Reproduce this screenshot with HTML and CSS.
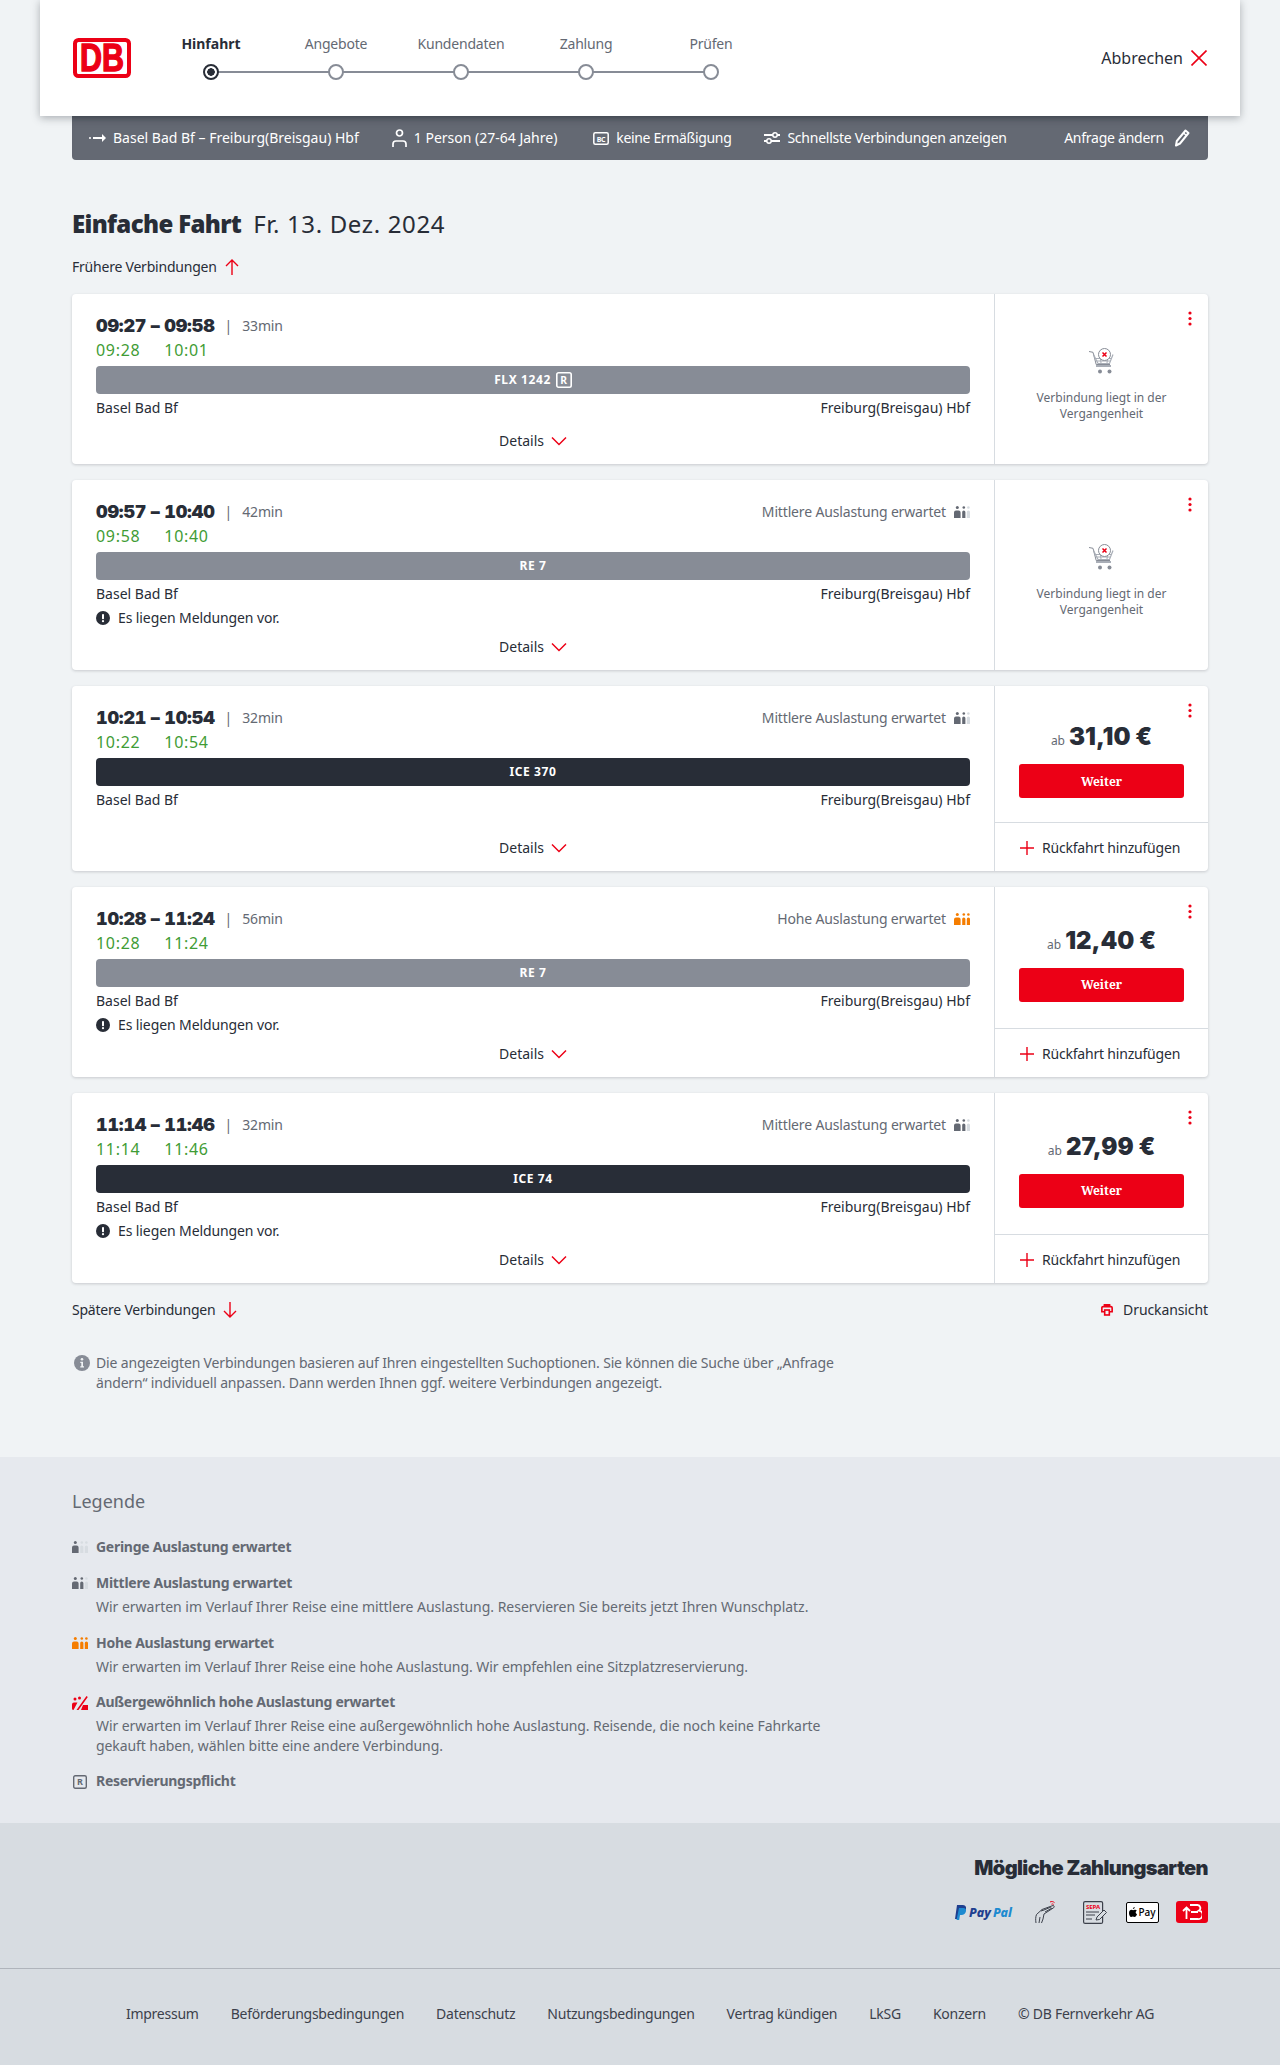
FILE: index.html
```html
<!DOCTYPE html>
<html lang="de">
<head>
<meta charset="utf-8">
<title>Angebote</title>
<link rel="stylesheet" href="styles.css">
</head>
<body>
<svg class="defs" width="0" height="0" aria-hidden="true">
  <symbol id="load" viewBox="0 0 16 12">
    <g class="p1"><circle cx="3.3" cy="1.5" r="1.5"/><path d="M0 6.5a2 2 0 0 1 2-2h2.6a2 2 0 0 1 2 2V12H0z"/></g>
    <g class="p2"><circle cx="9.8" cy="1.5" r="1.3"/><path d="M8.2 6a1.6 1.6 0 0 1 3.2 0v6H8.2z"/></g>
    <g class="p3"><circle cx="14.4" cy="1.5" r="1.3"/><path d="M12.8 6a1.6 1.6 0 0 1 3.2 0v6h-3.2z"/></g>
  </symbol>
  <symbol id="chev" viewBox="0 0 16 10"><path d="M1 1.5l7 7 7-7" fill="none" stroke="#ec0016" stroke-width="1.5"/></symbol>
  <symbol id="warn" viewBox="0 0 14 14"><circle cx="7" cy="7" r="7" fill="#282d37"/><rect x="6" y="3" width="2" height="5.2" rx=".8" fill="#fff"/><circle cx="7" cy="10.2" r="1.1" fill="#fff"/></symbol>
  <symbol id="plus" viewBox="0 0 14 14"><path d="M7 0v14M0 7h14" stroke="#ec0016" stroke-width="1.4" fill="none"/></symbol>
  <symbol id="dots" viewBox="0 0 4 15"><circle cx="2" cy="2" r="1.6"/><circle cx="2" cy="7.5" r="1.6"/><circle cx="2" cy="13" r="1.6"/></symbol>
  <symbol id="cart" viewBox="0 0 26 26">
    <path d="M0 3.5l4 .8 3.2 12.2h13.8" fill="none" stroke="#878c96" stroke-width="1"/>
    <path d="M4.5 6.5l4.5 9h11.5l3.5-9" fill="none" stroke="#a9aeb7" stroke-width="1.2"/>
    <path d="M5.5 10.5h17M7.5 13h14M11 7l1 8M19 7l-1 8" stroke="#a9aeb7" stroke-width="1" fill="none"/>
    <rect x="7" y="17" width="15" height="2" fill="#a9aeb7"/>
    <circle cx="11" cy="23.500" r="2" fill="#878c96"/><circle cx="20.500" cy="23.500" r="2" fill="#878c96"/>
    <circle cx="15.500" cy="6.500" r="6" fill="#fff" stroke="#878c96"/>
    <path d="M13.500 4.500l4 4M17.500 4.500l-4 4" stroke="#ec0016" stroke-width="1.500"/>
  </symbol>
</svg>

<header class="topbar">
  <svg class="logo" viewBox="0 0 58 40" width="58" height="40">
    <rect x="2" y="2" width="54" height="36" rx="3.500" fill="#fff" stroke="#ec0016" stroke-width="4"/>
    <text x="29" y="33" text-anchor="middle" textLength="44" lengthAdjust="spacingAndGlyphs" class="logo-text">DB</text>
  </svg>
  <ol class="steps">
    <li class="step active"><span class="step-label">Hinfahrt</span><span class="step-dot"></span></li>
    <li class="step"><span class="step-label">Angebote</span><span class="step-dot"></span></li>
    <li class="step"><span class="step-label">Kundendaten</span><span class="step-dot"></span></li>
    <li class="step"><span class="step-label">Zahlung</span><span class="step-dot"></span></li>
    <li class="step"><span class="step-label">Prüfen</span><span class="step-dot"></span></li>
  </ol>
  <a class="cancel">Abbrechen
    <svg width="16" height="16" viewBox="0 0 16 16"><path d="M.5.5l15 15M15.500.5l-15 15" stroke="#ec0016" stroke-width="1.600" fill="none"/></svg>
  </a>
</header>

<main class="main">
  <div class="summary">
    <span class="sum-item">
      <svg width="17" height="10" viewBox="0 0 17 10"><circle cx="1" cy="5" r="1" fill="#fff"/><path d="M4 4h9V1l4 4-4 4V6H4z" fill="#fff"/></svg>
      Basel Bad Bf – Freiburg(Breisgau) Hbf</span>
    <span class="sum-item">
      <svg width="15" height="18" viewBox="0 0 15 18"><circle cx="7.500" cy="4" r="3" fill="none" stroke="#fff" stroke-width="1.700"/><path d="M1 18v-3a3 3 0 0 1 3-3h7a3 3 0 0 1 3 3v3" fill="none" stroke="#fff" stroke-width="1.700"/></svg>
      1 Person (27-64 Jahre)</span>
    <span class="sum-item sum-disc">
      <svg width="16" height="13" viewBox="0 0 16 13"><rect x=".8" y=".8" width="14.400" height="11.400" rx="1.500" fill="none" stroke="#fff" stroke-width="1.500"/><text x="8" y="9.500" text-anchor="middle" class="bc">BC</text></svg>
      keine Ermäßigung</span>
    <span class="sum-item sum-fast">
      <svg width="16" height="14" viewBox="0 0 16 14"><path d="M0 4h9M13 4h3M0 10h3M7 10h9" stroke="#fff" stroke-width="1.800"/><circle cx="11" cy="4" r="2.200" fill="none" stroke="#fff" stroke-width="1.500"/><circle cx="5" cy="10" r="2.200" fill="none" stroke="#fff" stroke-width="1.500"/></svg>
      Schnellste Verbindungen anzeigen</span>
    <span class="sum-item sum-edit">Anfrage ändern
      <svg width="16" height="18" viewBox="0 0 16 18"><path d="M11.500 1.500l3 2.500-8.500 10.500-4 2 .8-4.500z" fill="none" stroke="#fff" stroke-width="2" stroke-linejoin="round"/><path d="M9.500 4l3 2.500" stroke="#fff" stroke-width="1.500"/></svg>
    </span>
  </div>

  <h1 class="page-title"><strong>Einfache Fahrt</strong> <span>Fr. 13. Dez. 2024</span></h1>

  <a class="nav-link nav-top">Frühere Verbindungen
    <svg width="14" height="16" viewBox="0 0 14 16"><path d="M7 16V1M1 7l6-6 6 6" fill="none" stroke="#ec0016" stroke-width="1.400"/></svg>
  </a>

  <section class="cards">
    <article class="card">
      <div class="trip">
        <div class="times">
          <b class="t-dep">09:27 –&nbsp;</b>
          <div class="t-rest"><b>09:58</b><span class="sep">|</span><span class="dur">33min</span></div>
          <span class="t-live">09:28</span><span class="t-live">10:01</span>
        </div>
        <div class="train grey">FLX 1242 <svg class="res" width="16" height="16" viewBox="0 0 14 14"><rect x=".7" y=".7" width="12.600" height="12.600" rx="1.500" fill="none" stroke="#fff" stroke-width="1.400"/><text x="7" y="10.300" text-anchor="middle" class="res-r">R</text></svg></div>
        <div class="stations"><span>Basel Bad Bf</span><span>Freiburg(Breisgau) Hbf</span></div>
        <div class="details">Details <svg width="16" height="10"><use href="#chev"/></svg></div>
      </div>
      <aside class="panel past">
        <svg class="menu" width="4" height="15"><use href="#dots"/></svg>
        <svg width="26" height="26"><use href="#cart"/></svg>
        <p>Verbindung liegt in der Vergangenheit</p>
      </aside>
    </article>

    <article class="card">
      <div class="trip">
        <div class="times">
          <b class="t-dep">09:57 –&nbsp;</b>
          <div class="t-rest"><b>10:40</b><span class="sep">|</span><span class="dur">42min</span><span class="load">Mittlere Auslastung erwartet <svg class="lv-mid" width="16" height="12"><use href="#load"/></svg></span></div>
          <span class="t-live">09:58</span><span class="t-live">10:40</span>
        </div>
        <div class="train grey">RE 7</div>
        <div class="stations"><span>Basel Bad Bf</span><span>Freiburg(Breisgau) Hbf</span></div>
        <div class="note"><svg width="14" height="14"><use href="#warn"/></svg>Es liegen Meldungen vor.</div>
        <div class="details">Details <svg width="16" height="10"><use href="#chev"/></svg></div>
      </div>
      <aside class="panel past">
        <svg class="menu" width="4" height="15"><use href="#dots"/></svg>
        <svg width="26" height="26"><use href="#cart"/></svg>
        <p>Verbindung liegt in der Vergangenheit</p>
      </aside>
    </article>

    <article class="card">
      <div class="trip">
        <div class="times">
          <b class="t-dep">10:21 –&nbsp;</b>
          <div class="t-rest"><b>10:54</b><span class="sep">|</span><span class="dur">32min</span><span class="load">Mittlere Auslastung erwartet <svg class="lv-mid" width="16" height="12"><use href="#load"/></svg></span></div>
          <span class="t-live">10:22</span><span class="t-live">10:54</span>
        </div>
        <div class="train dark">ICE 370</div>
        <div class="stations"><span>Basel Bad Bf</span><span>Freiburg(Breisgau) Hbf</span></div>
        <div class="details">Details <svg width="16" height="10"><use href="#chev"/></svg></div>
      </div>
      <aside class="panel">
        <svg class="menu" width="4" height="15"><use href="#dots"/></svg>
        <div class="offer">
          <div class="price"><small>ab</small> <b>31,10 €</b></div>
          <button class="btn">Weiter</button>
        </div>
        <div class="return"><svg width="14" height="14"><use href="#plus"/></svg>Rückfahrt hinzufügen</div>
      </aside>
    </article>

    <article class="card">
      <div class="trip">
        <div class="times">
          <b class="t-dep">10:28 –&nbsp;</b>
          <div class="t-rest"><b>11:24</b><span class="sep">|</span><span class="dur">56min</span><span class="load">Hohe Auslastung erwartet <svg class="lv-high" width="16" height="12"><use href="#load"/></svg></span></div>
          <span class="t-live">10:28</span><span class="t-live">11:24</span>
        </div>
        <div class="train grey">RE 7</div>
        <div class="stations"><span>Basel Bad Bf</span><span>Freiburg(Breisgau) Hbf</span></div>
        <div class="note"><svg width="14" height="14"><use href="#warn"/></svg>Es liegen Meldungen vor.</div>
        <div class="details">Details <svg width="16" height="10"><use href="#chev"/></svg></div>
      </div>
      <aside class="panel">
        <svg class="menu" width="4" height="15"><use href="#dots"/></svg>
        <div class="offer">
          <div class="price"><small>ab</small> <b>12,40 €</b></div>
          <button class="btn">Weiter</button>
        </div>
        <div class="return"><svg width="14" height="14"><use href="#plus"/></svg>Rückfahrt hinzufügen</div>
      </aside>
    </article>

    <article class="card">
      <div class="trip">
        <div class="times">
          <b class="t-dep">11:14 –&nbsp;</b>
          <div class="t-rest"><b>11:46</b><span class="sep">|</span><span class="dur">32min</span><span class="load">Mittlere Auslastung erwartet <svg class="lv-mid" width="16" height="12"><use href="#load"/></svg></span></div>
          <span class="t-live">11:14</span><span class="t-live">11:46</span>
        </div>
        <div class="train dark">ICE 74</div>
        <div class="stations"><span>Basel Bad Bf</span><span>Freiburg(Breisgau) Hbf</span></div>
        <div class="note"><svg width="14" height="14"><use href="#warn"/></svg>Es liegen Meldungen vor.</div>
        <div class="details">Details <svg width="16" height="10"><use href="#chev"/></svg></div>
      </div>
      <aside class="panel">
        <svg class="menu" width="4" height="15"><use href="#dots"/></svg>
        <div class="offer">
          <div class="price"><small>ab</small> <b>27,99 €</b></div>
          <button class="btn">Weiter</button>
        </div>
        <div class="return"><svg width="14" height="14"><use href="#plus"/></svg>Rückfahrt hinzufügen</div>
      </aside>
    </article>
  </section>

  <div class="after-cards">
    <a class="nav-link">Spätere Verbindungen
      <svg width="14" height="16" viewBox="0 0 14 16"><path d="M7 0v15M1 9l6 6 6-6" fill="none" stroke="#ec0016" stroke-width="1.400"/></svg>
    </a>
    <a class="nav-link print">
      <svg width="12" height="12" viewBox="0 0 14 14"><path d="M3.500 9H1V4.500A1.500 1.500 0 0 1 2.500 3h9A1.500 1.500 0 0 1 13 4.500V9h-2.500M4 3V1h6v2" fill="none" stroke="#ec0016" stroke-width="1.900"/><rect x="4.300" y="7" width="5.400" height="5.800" fill="none" stroke="#ec0016" stroke-width="1.900"/></svg>
      Druckansicht
    </a>
  </div>

  <div class="info">
    <svg width="16" height="16" viewBox="0 0 16 16"><circle cx="8" cy="8" r="8" fill="#878c96"/><circle cx="8" cy="4.300" r="1.300" fill="#f0f3f5"/><path d="M6.300 6.800h2.700v4.500h1v1.300H6.300v-1.300h1V8.100h-1z" fill="#f0f3f5"/></svg>
    <p>Die angezeigten Verbindungen basieren auf Ihren eingestellten Suchoptionen. Sie können die Suche über „Anfrage ändern“ individuell anpassen. Dann werden Ihnen ggf. weitere Verbindungen angezeigt.</p>
  </div>
</main>

<section class="legend">
  <h2>Legende</h2>
  <ul class="legend-list">
    <li><svg class="lv-low" width="16" height="12"><use href="#load"/></svg><div><h3>Geringe Auslastung erwartet</h3></div></li>
    <li class="lg-mid"><svg class="lv-mid" width="16" height="12"><use href="#load"/></svg><div><h3>Mittlere Auslastung erwartet</h3><p>Wir erwarten im Verlauf Ihrer Reise eine mittlere Auslastung. Reservieren Sie bereits jetzt Ihren Wunschplatz.</p></div></li>
    <li><svg class="lv-high" width="16" height="12"><use href="#load"/></svg><div><h3>Hohe Auslastung erwartet</h3><p>Wir erwarten im Verlauf Ihrer Reise eine hohe Auslastung. Wir empfehlen eine Sitzplatzreservierung.</p></div></li>
    <li><svg width="16" height="14" viewBox="0 0 16 14"><circle cx="3" cy="3" r="1.500" fill="#ec0016"/><circle cx="7.500" cy="2" r="1.500" fill="#ec0016"/><path d="M0 8.500a2 2 0 0 1 2-2h3.500L1.500 14A1.500 1.500 0 0 1 0 12.500zM14.500 0l1.300 1L6.500 14H4.500zM11 9h5v5h-7z" fill="#ec0016"/></svg><div><h3>Außergewöhnlich hohe Auslastung erwartet</h3><p>Wir erwarten im Verlauf Ihrer Reise eine außergewöhnlich hohe Auslastung. Reisende, die noch keine Fahrkarte gekauft haben, wählen bitte eine andere Verbindung.</p></div></li>
    <li><svg width="14" height="14" viewBox="0 0 14 14"><rect x=".7" y=".7" width="12.600" height="12.600" rx="1.500" fill="none" stroke="#646973" stroke-width="1.400"/><text x="7" y="10.300" text-anchor="middle" class="res-r grey-r">R</text></svg><div><h3>Reservierungspflicht</h3></div></li>
  </ul>
</section>

<section class="payments">
  <h2>Mögliche Zahlungsarten</h2>
  <div class="pay-icons">
    <span class="paypal"><svg width="13" height="15" viewBox="0 0 13 15"><path d="M3 0h5.500C11 0 12.500 1.500 12 4c-.5 3-2.500 4.500-5 4.500H5L4 14H1z" fill="#1f3f8f"/><path d="M5 3h4.500c1.500 0 2.800 1 2.500 3-.4 2.500-2.300 4-4.500 4H6l-.8 5H2.500z" fill="#1d8ad0"/></svg><i class="pp1">Pay</i><i class="pp2">Pal</i></span>
    <svg class="hand" width="24" height="24" viewBox="0 0 24 24"><path d="M17 2c1.500-.8 3-.6 4.500.6M18.500 4.200c.8-.4 1.500-.3 2.200.3" stroke="#ec0016" fill="none"/><path d="M3 23c-.5-3-.5-6 .5-8.500L9 9.500l11-4c1-.3 1.700 1.600.7 2.200L11 14l-1 5-1.500 4M6 23l1-6M8 11l3-1 7-3M12 12l7-4" fill="none" stroke="#3c414b" stroke-width="1"/></svg>
    <span class="sepa"><svg width="25" height="23" viewBox="0 0 25 23"><rect x=".6" y=".6" width="19" height="21.800" rx="1.500" fill="none" stroke="#3c414b" stroke-width="1.200"/><path d="M3 11h13M3 14h9M3 18h6" stroke="#3c414b"/><path d="M13 19l1-3 7-7 2.500 2.500-7 7z" fill="#d7dce1" stroke="#3c414b"/><text x="10" y="7.500" text-anchor="middle" class="sepa-t">SEPA</text></svg></span>
    <span class="apple"><svg width="8" height="10" viewBox="0 0 8 10"><path d="M5.700 0c.1 1-.8 2-1.800 2C3.800 1 4.700.1 5.700 0zM6.700 5.300c0 1 .6 1.600 1.300 1.900C7.500 8.500 6.500 10 5.500 10c-.6 0-1-.4-1.700-.4S2.800 10 2.200 10C1 10 0 7.900 0 6c0-2 1.300-3.200 2.500-3.200.7 0 1.200.4 1.600.4s1-.5 1.900-.4c.4 0 1.300.2 1.800 1-.4.300-1.100.7-1.100 1.500z" fill="#000"/></svg>Pay</span>
    <span class="bahn-pay"><svg width="20" height="16" viewBox="0 0 20 16"><path d="M8 1h7.500a3 3 0 0 1 1.500 5.500A3.300 3.300 0 0 1 15.500 15H8M9 8h7" fill="none" stroke="#fff" stroke-width="1.800"/><path d="M1 7l3.500-3.500L8 7M4.500 4v11" fill="none" stroke="#fff" stroke-width="1.800"/></svg></span>
  </div>
</section>

<footer class="footer">
  <a>Impressum</a><a>Beförderungsbedingungen</a><a>Datenschutz</a><a>Nutzungsbedingungen</a><a>Vertrag kündigen</a><a>LkSG</a><a>Konzern</a><span>© DB Fernverkehr AG</span>
</footer>
</body>
</html>
```

FILE: styles.css
```css
* { box-sizing: border-box; }
html, body { margin: 0; padding: 0; }
body {
  background: #f0f3f5;
  color: #282d37;
  font: 14px/24px "Noto Sans", "Liberation Sans", sans-serif;
}
h1, h2, h3, p, ul, ol { margin: 0; padding: 0; list-style: none; font-weight: 400; }
svg { display: block; flex: none; }
.defs { position: absolute; }

/* top */
.topbar {
  position: relative;
  z-index: 2;
  width: 1200px;
  height: 116px;
  margin: 0 40px;
  padding: 0 33px 0 33px;
  background: #fff;
  box-shadow: 0 2px 8px rgba(40, 45, 55, .35);
  display: flex;
  align-items: center;
}
.logo { overflow: visible; }
.logo-text { font: 700 38px "Liberation Sans", sans-serif; fill: #ec0016; stroke: #ec0016; stroke-width: 1.400px; }
.steps { display: flex; margin-left: 17.5px; }
.step {
  position: relative;
  width: 125px;
  height: 56px;
  display: flex;
  flex-direction: column;
  align-items: center;
  color: #646973;
  font-size: 14px;
  letter-spacing: -.2px;
}
.step-label { height: 24px; line-height: 24px; margin-top: 2px; }
.step-dot {
  width: 16px;
  height: 16px;
  margin-top: 8px;
  border: 2px solid #878c96;
  border-radius: 50%;
  background: #fff;
  position: relative;
  z-index: 1;
}
.step + .step::before {
  content: "";
  position: absolute;
  left: -50%;
  right: 50%;
  top: 41px;
  height: 2px;
  background: #878c96;
}
.step.active { color: #282d37; font-weight: 700; letter-spacing: 0; }
.step.active .step-dot { border-color: #282d37; background: radial-gradient(circle, #282d37 0 3.500px, #fff 4px); }
.cancel { margin-left: auto; display: flex; align-items: center; gap: 8px; font-size: 16px; }

/* main */
.main { padding: 0 72px; height: 1341px; }
.summary {
  height: 44px;
  padding: 0 18px 0 17px;
  background: #646973;
  border-radius: 0 0 4px 4px;
  box-shadow: inset 0 6px 6px -5px rgba(40, 45, 55, .5);
  color: #fff;
  display: flex;
  align-items: center;
  gap: 33px;
}
.sum-item { display: flex; align-items: center; gap: 7px; white-space: nowrap; }
.sum-disc { margin-left: 3px; letter-spacing: -.35px; }
.sum-fast { letter-spacing: -.25px; }
.sum-edit { margin-left: auto; gap: 10px; letter-spacing: -.25px; }
.bc { font: 700 7px "Noto Sans", sans-serif; fill: #fff; }
.page-title { margin-top: 48px; font-size: 24px; line-height: 32px; display: flex; gap: 12px; }
.page-title strong { font-weight: 900; letter-spacing: -.65px; }
.page-title span { letter-spacing: .65px; }
.nav-link { display: inline-flex; align-items: center; gap: 8px; height: 24px; letter-spacing: -.22px; }
.nav-top { margin-top: 15px; }

/* cards */
.cards { display: flex; flex-direction: column; gap: 16px; margin-top: 15px; }
.card {
  display: flex;
  min-height: 170px;
  background: #fff;
  border-radius: 4px;
  box-shadow: 0 1px 3px rgba(40, 45, 55, .2);
}
.trip {
  width: 923px;
  padding: 20px 24px 11px;
  border-right: 1px solid #d7dce1;
  display: flex;
  flex-direction: column;
}
.times { display: grid; grid-template-columns: auto 1fr; }
.t-dep, .t-rest b { font: 900 18px/24px Inter, "Noto Sans", sans-serif; font-variant-numeric: tabular-nums; letter-spacing: -.2px; }
.t-rest { display: flex; align-items: center; }
.sep { margin: 0 10px; color: #646973; font-size: 14px; }
.dur { color: #646973; font-size: 14px; letter-spacing: -.2px; }
.load { margin-left: auto; display: flex; align-items: center; gap: 8px; color: #646973; letter-spacing: -.15px; }
.t-live { font-size: 16px; line-height: 24px; color: #3f9c35; letter-spacing: .7px; }
.train {
  height: 28px;
  margin-top: 4px;
  border-radius: 4px;
  color: #fff;
  font-size: 12px;
  font-weight: 700;
  letter-spacing: .6px;
  display: flex;
  align-items: center;
  justify-content: center;
  gap: 5px;
}
.train.grey { background: #878c96; }
.train.dark { background: #282d37; }
.res-r { font: 700 9px "Noto Sans", sans-serif; fill: #fff; }
.grey-r { fill: #646973; }
.stations { margin-top: 2px; display: flex; justify-content: space-between; }
.note { display: flex; align-items: center; gap: 8px; letter-spacing: -.1px; }
.details { margin-top: auto; padding-top: 5px; display: flex; justify-content: center; align-items: center; gap: 7px; }

.p1 { fill: var(--l1); }
.p2 { fill: var(--l2); }
.p3 { fill: var(--l3); }
.lv-low { --l1: #646973; --l2: #d7dce1; --l3: #d7dce1; }
.lv-mid { --l1: #646973; --l2: #646973; --l3: #d7dce1; }
.lv-high { --l1: #f57d00; --l2: #f57d00; --l3: #f57d00; }

.panel { position: relative; width: 213px; display: flex; flex-direction: column; }
.menu { position: absolute; top: 16.500px; right: 16px; fill: #ec0016; }
.past { align-items: center; justify-content: center; padding-top: 12px; color: #646973; }
.past p { margin-top: 16px; padding: 0 36px; font-size: 12px; line-height: 16px; text-align: center; }
.offer { flex: 1; padding: 35px 24px 24px; display: flex; flex-direction: column; justify-content: center; }
.price { height: 32px; display: flex; align-items: baseline; justify-content: center; gap: 4px; line-height: 32px; }
.price small { font-size: 12px; color: #646973; }
.price b { font: 900 24px/32px Inter, "Noto Sans", sans-serif; }
.btn {
  height: 34px;
  margin-top: 11px;
  border: 0;
  border-radius: 3px;
  background: #ec0016;
  color: #fff;
  font: 700 12px "Noto Serif", "DejaVu Serif", serif;
}
.return { height: 49px; padding: 1px 0 0 25px; border-top: 1px solid #d7dce1; display: flex; align-items: center; gap: 8px; letter-spacing: -.2px; }

.after-cards { margin-top: 15px; display: flex; justify-content: space-between; }
.print { gap: 10px; letter-spacing: -.1px; }
.info { margin-top: 31px; display: flex; gap: 6px; color: #646973; line-height: 20px; letter-spacing: -.16px; }
.info svg { margin: 2px 0 0 2px; }
.info p { width: 740px; }

/* legend */
.legend { height: 366px; padding: 30px 72px 0; background: #e6e9ee; color: #646973; }
.legend h2 { font-size: 18px; line-height: 28px; }
.legend-list { margin-top: 20px; display: flex; flex-direction: column; gap: 13px; }
.legend-list li { display: flex; gap: 8px; }
.legend-list li > svg { width: 16px; margin-top: 6px; }
.legend-list .lg-mid { margin: -1px 0 1px; }
.legend-list h3 { font-weight: 700; font-size: 14px; line-height: 24px; letter-spacing: -.28px; }
.legend-list p { margin-top: 2px; line-height: 20px; width: 760px; letter-spacing: -.08px; }
.legend-list .lg-mid p { letter-spacing: -.02px; }

/* pay */
.payments { height: 145px; padding: 31px 72px 0; background: #d7dce1; text-align: right; }
.payments h2 { font: 900 20px/28px Inter, "Noto Sans", sans-serif; letter-spacing: -.6px; }
.pay-icons { margin-top: 18px; height: 24px; display: flex; justify-content: flex-end; align-items: center; }
.paypal { display: flex; align-items: center; gap: 2px; font: italic 800 12.500px "Noto Sans", sans-serif; }
.hand { margin-left: 21px; }
.sepa { margin-left: 26px; }
.apple { margin-left: 18px; }
.bahn-pay { margin-left: 17px; }
.pp1 { color: #1f3f8f; }
.pp2 { color: #1d8ad0; }
.apple { width: 33px; height: 21px; border: 1px solid #000; border-radius: 2px; background: #fff; display: flex; align-items: center; justify-content: center; gap: 1px; font: 500 10px "Noto Sans", sans-serif; color: #000; }
.bahn-pay { width: 32px; height: 22px; border-radius: 3px; background: #ec0016; display: flex; align-items: center; justify-content: center; }
.sepa-t { font: 700 6px "Noto Sans", sans-serif; fill: #ec0016; }

/* footer */
.footer {
  height: 97px;
  padding-top: 33px;
  border-top: 1px solid #afb4bb;
  background: #d7dce1;
  color: #3c414b;
  display: flex;
  justify-content: center;
  gap: 32px;
  letter-spacing: -.25px;
}
```
